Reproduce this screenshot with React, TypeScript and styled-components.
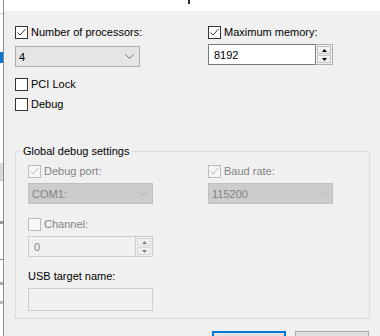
import React from "react";
import styled, { createGlobalStyle } from "styled-components";

const Global = createGlobalStyle`
  html, body {
    margin: 0;
    padding: 0;
    background: #f0f0f0;
  }
`;

const Frame = styled.div`
  width: 380px;
  height: 336px;
  display: flex;
  overflow: hidden;
  background: #f0f0f0;
  font-family: "Liberation Sans", Arial, sans-serif;
  font-size: 11px;
  color: #000;
`;

// sliver of the window that sits behind the dialog
const BackWindow = styled.div`
  width: 3px;
  flex-shrink: 0;
  background: #fff;
  border-right: 1px solid #8c8c8c;
  display: flex;
  flex-direction: column;
`;

const BackBit = styled.div<{ $top: number; $h: number; $color: string }>`
  margin-top: ${(p) => p.$top}px;
  height: ${(p) => p.$h}px;
  background: ${(p) => p.$color};
`;

const Dialog = styled.div`
  flex: 1;
  display: flex;
  flex-direction: column;
`;

const TopStrip = styled.div`
  height: 11px;
  flex-shrink: 0;
  background: #fff;
  display: flex;
`;

const Mark = styled.div`
  margin-left: 184px;
  width: 2px;
  height: 4px;
  background: #2b2b2b;
`;

const Body = styled.div`
  padding: 15px 10px 0 11px;
  display: flex;
  flex-direction: column;
`;

const Columns = styled.div<{ $gap: number }>`
  display: grid;
  grid-template-columns: 125px 125px;
  column-gap: ${(p) => p.$gap}px;
`;

const Column = styled.div`
  display: flex;
  flex-direction: column;
`;

const CheckRow = styled.label<{ $mt?: number; $disabled?: boolean }>`
  display: flex;
  align-items: center;
  gap: 3px;
  height: 13px;
  line-height: 13px;
  margin-top: ${(p) => p.$mt ?? 0}px;
  color: ${(p) => (p.$disabled ? "#838383" : "#000")};
  white-space: nowrap;
`;

const Box = styled.span<{ $disabled?: boolean }>`
  width: 13px;
  height: 13px;
  box-sizing: border-box;
  flex-shrink: 0;
  border: 1px solid ${(p) => (p.$disabled ? "#bcbcbc" : "#333")};
  background: ${(p) => (p.$disabled ? "#f7f7f7" : "#fff")};
  display: flex;
`;

const Combo = styled.div<{ $mt: number; $disabled?: boolean }>`
  margin-top: ${(p) => p.$mt}px;
  height: 21px;
  box-sizing: border-box;
  border: 1px solid ${(p) => (p.$disabled ? "#bfbfbf" : "#adadad")};
  background: ${(p) => (p.$disabled ? "#cccccc" : "#e5e5e5")};
  color: ${(p) => (p.$disabled ? "#838383" : "#000")};
  display: flex;
  align-items: center;
  justify-content: space-between;
  padding: 0 5px 0 3px;
`;

const Spin = styled.div<{ $mt: number }>`
  margin-top: ${(p) => p.$mt}px;
  height: 21px;
  display: flex;
  box-sizing: border-box;
`;

const SpinField = styled.div<{ $disabled?: boolean }>`
  flex: 1;
  box-sizing: border-box;
  border: 1px solid ${(p) => (p.$disabled ? "#cccccc" : "#7a7a7a")};
  border-right: none;
  background: ${(p) => (p.$disabled ? "#f0f0f0" : "#fff")};
  color: ${(p) => (p.$disabled ? "#838383" : "#000")};
  display: flex;
  align-items: center;
  padding-left: 5px;
`;

const SpinButtons = styled.div<{ $disabled?: boolean }>`
  width: 18px;
  box-sizing: border-box;
  border: 1px solid ${(p) => (p.$disabled ? "#cccccc" : "#adadad")};
  border-left-color: ${(p) => (p.$disabled ? "#cccccc" : "#7a7a7a")};
  background: #f0f0f0;
  display: flex;
  flex-direction: column;
  padding: 1px;
  gap: 1px;
`;

const SpinButton = styled.div<{ $disabled?: boolean }>`
  flex: 1;
  border: 1px solid ${(p) => (p.$disabled ? "#d9d9d9" : "#c4c4c4")};
  display: flex;
  align-items: center;
  justify-content: center;
`;

const Group = styled.fieldset`
  margin: 33px 0 0 0;
  padding: 7px 11px 7px 12px;
  border: 1px solid #dcdcdc;
  min-width: 0;
`;

const Legend = styled.legend`
  margin-left: -6px;
  padding: 0 2px 0 1px;
  line-height: 14px;
  color: #000;
`;

const Label = styled.div<{ $mt: number }>`
  margin-top: ${(p) => p.$mt}px;
  line-height: 15px;
  color: #000;
`;

const TextBox = styled.div<{ $mt: number }>`
  margin-top: ${(p) => p.$mt}px;
  height: 23px;
  box-sizing: border-box;
  border: 1px solid #cccccc;
  background: #f0f0f0;
`;

const ButtonRow = styled.div`
  margin-top: 12px;
  display: flex;
  justify-content: flex-end;
  gap: 9px;
  padding-right: 1px;
`;

const Button = styled.div<{ $primary?: boolean }>`
  width: 74px;
  height: 23px;
  box-sizing: border-box;
  background: #e1e1e1;
  border: ${(p) => (p.$primary ? "2px solid #0078d7" : "1px solid #adadad")};
`;

const Check = ({ disabled }: { disabled?: boolean }) => (
  <svg width="11" height="11" viewBox="0 0 11 11">
    <polyline
      points="1.5,5.5 4,8 9.5,2"
      fill="none"
      stroke={disabled ? "#bcbcbc" : "#333"}
      strokeWidth="1"
    />
  </svg>
);

const Checkbox = ({
  label,
  checked,
  disabled,
  mt,
}: {
  label: string;
  checked?: boolean;
  disabled?: boolean;
  mt?: number;
}) => (
  <CheckRow $mt={mt} $disabled={disabled}>
    <Box $disabled={disabled}>{checked && <Check disabled={disabled} />}</Box>
    {label}
  </CheckRow>
);

const Chevron = ({ color }: { color: string }) => (
  <svg width="9" height="5" viewBox="0 0 9 5">
    <polyline points="0.5,0.5 4.5,4.5 8.5,0.5" fill="none" stroke={color} strokeWidth="1" />
  </svg>
);

const Arrow = ({ up, color }: { up?: boolean; color: string }) => (
  <svg width="5" height="3" viewBox="0 0 5 3">
    <polygon points={up ? "2.5,0 5,3 0,3" : "0,0 5,0 2.5,3"} fill={color} />
  </svg>
);

const NumberBox = ({ value, mt, disabled }: { value: string; mt: number; disabled?: boolean }) => {
  const arrow = disabled ? "#838383" : "#000";
  return (
    <Spin $mt={mt}>
      <SpinField $disabled={disabled}>{value}</SpinField>
      <SpinButtons $disabled={disabled}>
        <SpinButton $disabled={disabled}>
          <Arrow up color={arrow} />
        </SpinButton>
        <SpinButton $disabled={disabled}>
          <Arrow color={arrow} />
        </SpinButton>
      </SpinButtons>
    </Spin>
  );
};

export default function App() {
  return (
    <Frame>
      <Global />
      <BackWindow>
        <BackBit $top={13} $h={1} $color="#d0d0d0" />
        <BackBit $top={38} $h={11} $color="#0078d7" />
        <BackBit $top={100} $h={17} $color="#dadada" />
        <BackBit $top={0} $h={1} $color="#c8c8c8" />
        <BackBit $top={40} $h={3} $color="#9a9a9a" />
        <BackBit $top={35} $h={1} $color="#8a8a8a" />
        <BackBit $top={22} $h={3} $color="#aaaaaa" />
        <BackBit $top={16} $h={3} $color="#bbbbbb" />
      </BackWindow>
      <Dialog>
        <TopStrip>
          <Mark />
        </TopStrip>
        <Body>
          <Columns $gap={68}>
            <Column>
              <Checkbox label="Number of processors:" checked />
              <Combo $mt={7}>
                <span>4</span>
                <Chevron color="#6d6d6d" />
              </Combo>
              <Checkbox label="PCI Lock" mt={11} />
              <Checkbox label="Debug" mt={7} />
            </Column>
            <Column>
              <Checkbox label="Maximum memory:" checked />
              <NumberBox value="8192" mt={5} />
            </Column>
          </Columns>
          <Group>
            <Legend>Global debug settings</Legend>
            <Columns $gap={55}>
              <Column>
                <Checkbox label="Debug port:" checked disabled />
                <Combo $mt={5} $disabled>
                  <span>COM1:</span>
                  <Chevron color="#b0b0b0" />
                </Combo>
                <Checkbox label="Channel:" disabled mt={14} />
                <NumberBox value="0" mt={5} disabled />
                <Label $mt={12}>USB target name:</Label>
                <TextBox $mt={4} />
              </Column>
              <Column>
                <Checkbox label="Baud rate:" checked disabled />
                <Combo $mt={5} $disabled>
                  <span>115200</span>
                  <Chevron color="#b0b0b0" />
                </Combo>
              </Column>
            </Columns>
          </Group>
          <ButtonRow>
            <Button $primary />
            <Button />
          </ButtonRow>
        </Body>
      </Dialog>
    </Frame>
  );
}
